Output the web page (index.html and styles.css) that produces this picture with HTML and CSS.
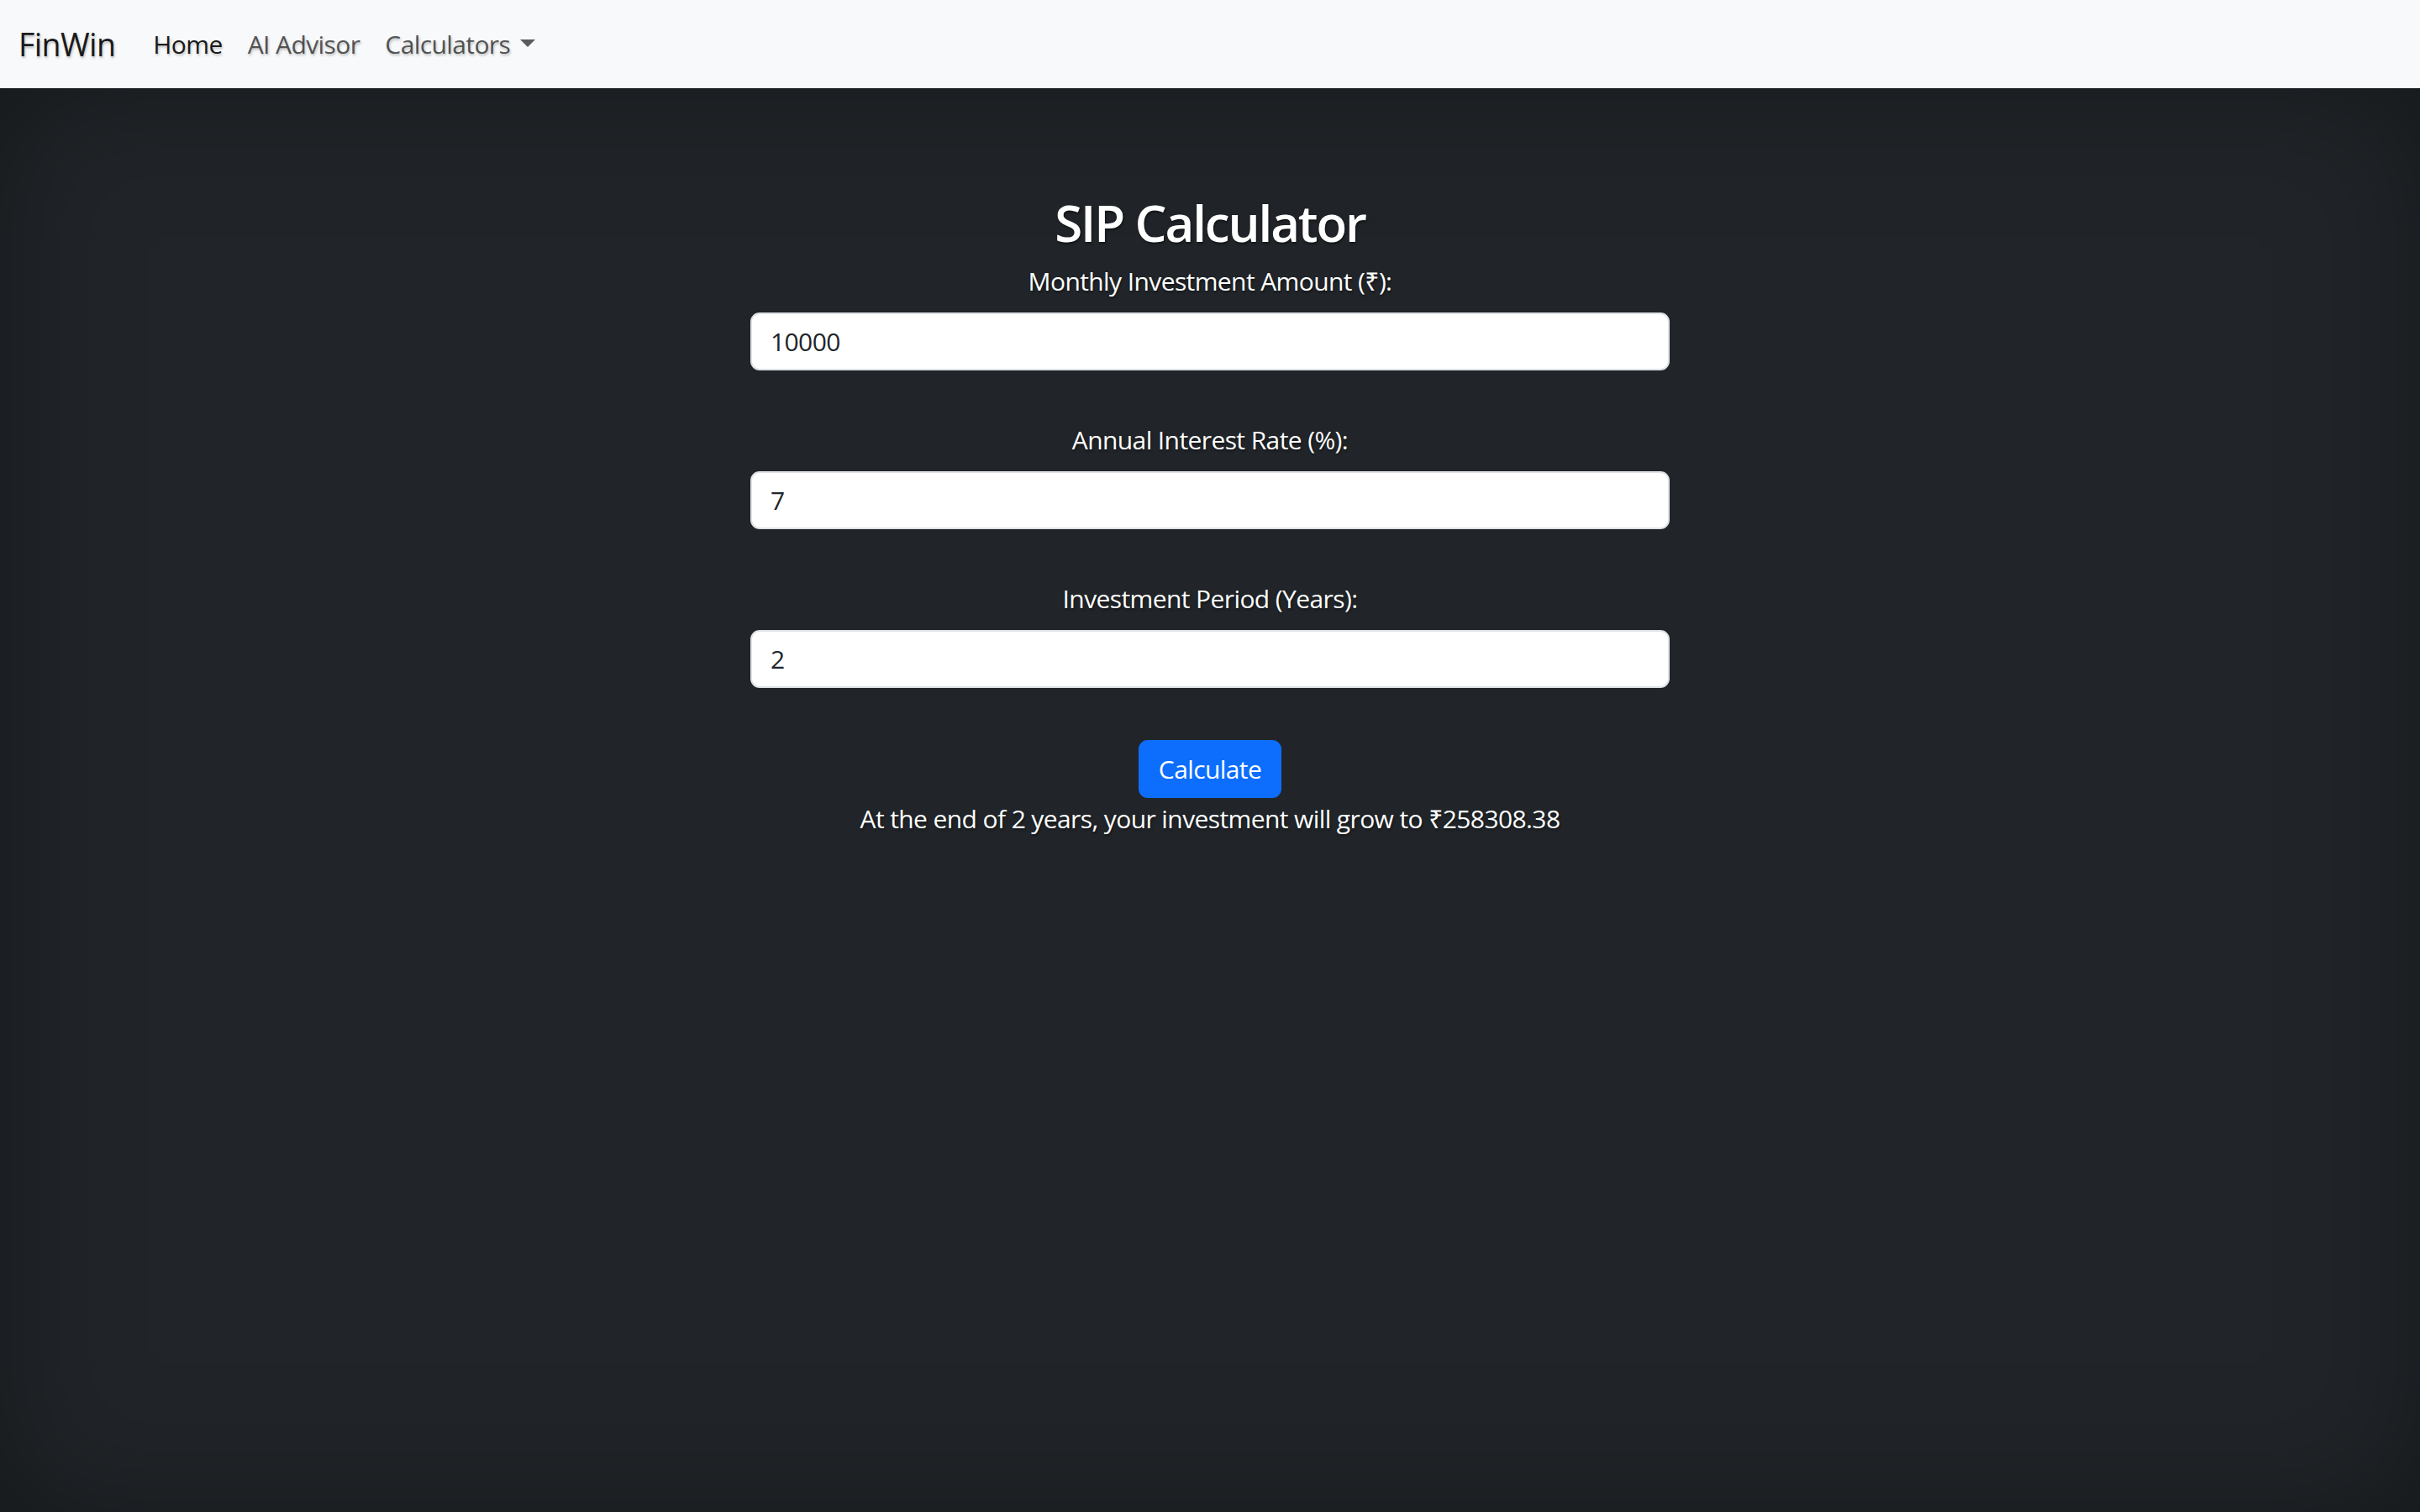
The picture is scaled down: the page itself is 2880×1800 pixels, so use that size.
FILE: index.html
```html
<!DOCTYPE html>
<html lang="en">
<head>
<meta charset="utf-8">
<title>SIP Calculator - FinWin</title>
<link rel="stylesheet" href="styles.css">
</head>
<body>
<nav class="navbar">
  <a class="brand" href="#">FinWin</a>
  <ul class="nav">
    <li><a class="nav-link active" href="#">Home</a></li>
    <li><a class="nav-link" href="#">AI Advisor</a></li>
    <li><a class="nav-link" href="#">Calculators<span class="caret"></span></a></li>
  </ul>
</nav>
<main class="page">
  <div class="calc">
    <h2 class="title">SIP Calculator</h2>
    <form class="form">
      <div class="field">
        <label class="label" for="amount">Monthly Investment Amount (₹):</label>
        <input class="input" id="amount" type="text" value="10000">
      </div>
      <div class="field">
        <label class="label" for="rate">Annual Interest Rate (%):</label>
        <input class="input" id="rate" type="text" value="7">
      </div>
      <div class="field field-last">
        <label class="label" for="years">Investment Period (Years):</label>
        <input class="input" id="years" type="text" value="2">
      </div>
      <button class="btn" type="button">Calculate</button>
    </form>
    <p class="result">At the end of 2 years, your investment will grow to ₹258308.38</p>
  </div>
</main>
</body>
</html>
```

FILE: styles.css
```css
html, body {
  margin: 0;
  padding: 0;
}

body {
  font-family: "Open Sans", "Noto Sans", sans-serif;
  font-size: 30px;
  line-height: 1.5;
  letter-spacing: -0.02em;
  background: #212529;
  color: #fff;
}

.navbar {
  display: flex;
  align-items: center;
  height: 105px;
  padding: 0 22px;
  box-sizing: border-box;
  background: #f8f9fa;
}

.brand {
  font-size: 37.5px;
  line-height: 56px;
  color: rgba(0, 0, 0, 0.9);
  text-decoration: none;
  margin-right: 30px;
  text-shadow: 1px 2px 3px rgba(0, 0, 0, 0.25);
}

.nav {
  display: flex;
  list-style: none;
  margin: 0;
  padding: 0;
}

.nav-link {
  display: block;
  padding: 0 15px;
  line-height: 45px;
  color: rgba(0, 0, 0, 0.65);
  text-decoration: none;
  text-shadow: 1px 2px 3px rgba(0, 0, 0, 0.25);
}

.nav-link.active {
  color: rgba(0, 0, 0, 0.9);
}

.caret {
  display: inline-block;
  margin-left: 12px;
  vertical-align: 8px;
  border-top: 9px solid #5a5c5e;
  border-left: 9px solid transparent;
  border-right: 9px solid transparent;
}

.page {
  min-height: calc(100vh - 105px);
  box-sizing: border-box;
  padding-top: 122px;
  display: flex;
  justify-content: center;
  box-shadow: inset 0 0 160px rgba(0, 0, 0, 0.35);
  text-shadow: 1px 2px 3px rgba(0, 0, 0, 0.45);
}

.calc {
  width: 1094px;
  display: flex;
  flex-direction: column;
  align-items: center;
  text-align: center;
}

.title {
  margin: 0 0 11px;
  padding-top: 2px;
  font-size: 60px;
  font-weight: 600;
  line-height: 72px;
  letter-spacing: -0.035em;
}

.form {
  width: 100%;
  display: flex;
  flex-direction: column;
  align-items: center;
}

.field {
  width: 100%;
  display: flex;
  flex-direction: column;
  align-items: center;
  margin-bottom: 60px;
}

.field-last {
  margin-bottom: 62px;
}

.label {
  line-height: 45px;
  margin-bottom: 15px;
}

.input {
  width: 100%;
  height: 69px;
  box-sizing: border-box;
  padding: 0 22px;
  border: 2px solid #dee2e6;
  border-radius: 11px;
  background: #fff;
  color: #212529;
  font: inherit;
  letter-spacing: -0.02em;
  text-shadow: none;
}

.btn {
  height: 69px;
  box-sizing: border-box;
  padding: 0 22px;
  border: 2px solid #0d6efd;
  border-radius: 11px;
  background: #0d6efd;
  color: #fff;
  font: inherit;
  letter-spacing: -0.02em;
}

.result {
  margin: 2px 0 0;
  line-height: 45px;
}
```
